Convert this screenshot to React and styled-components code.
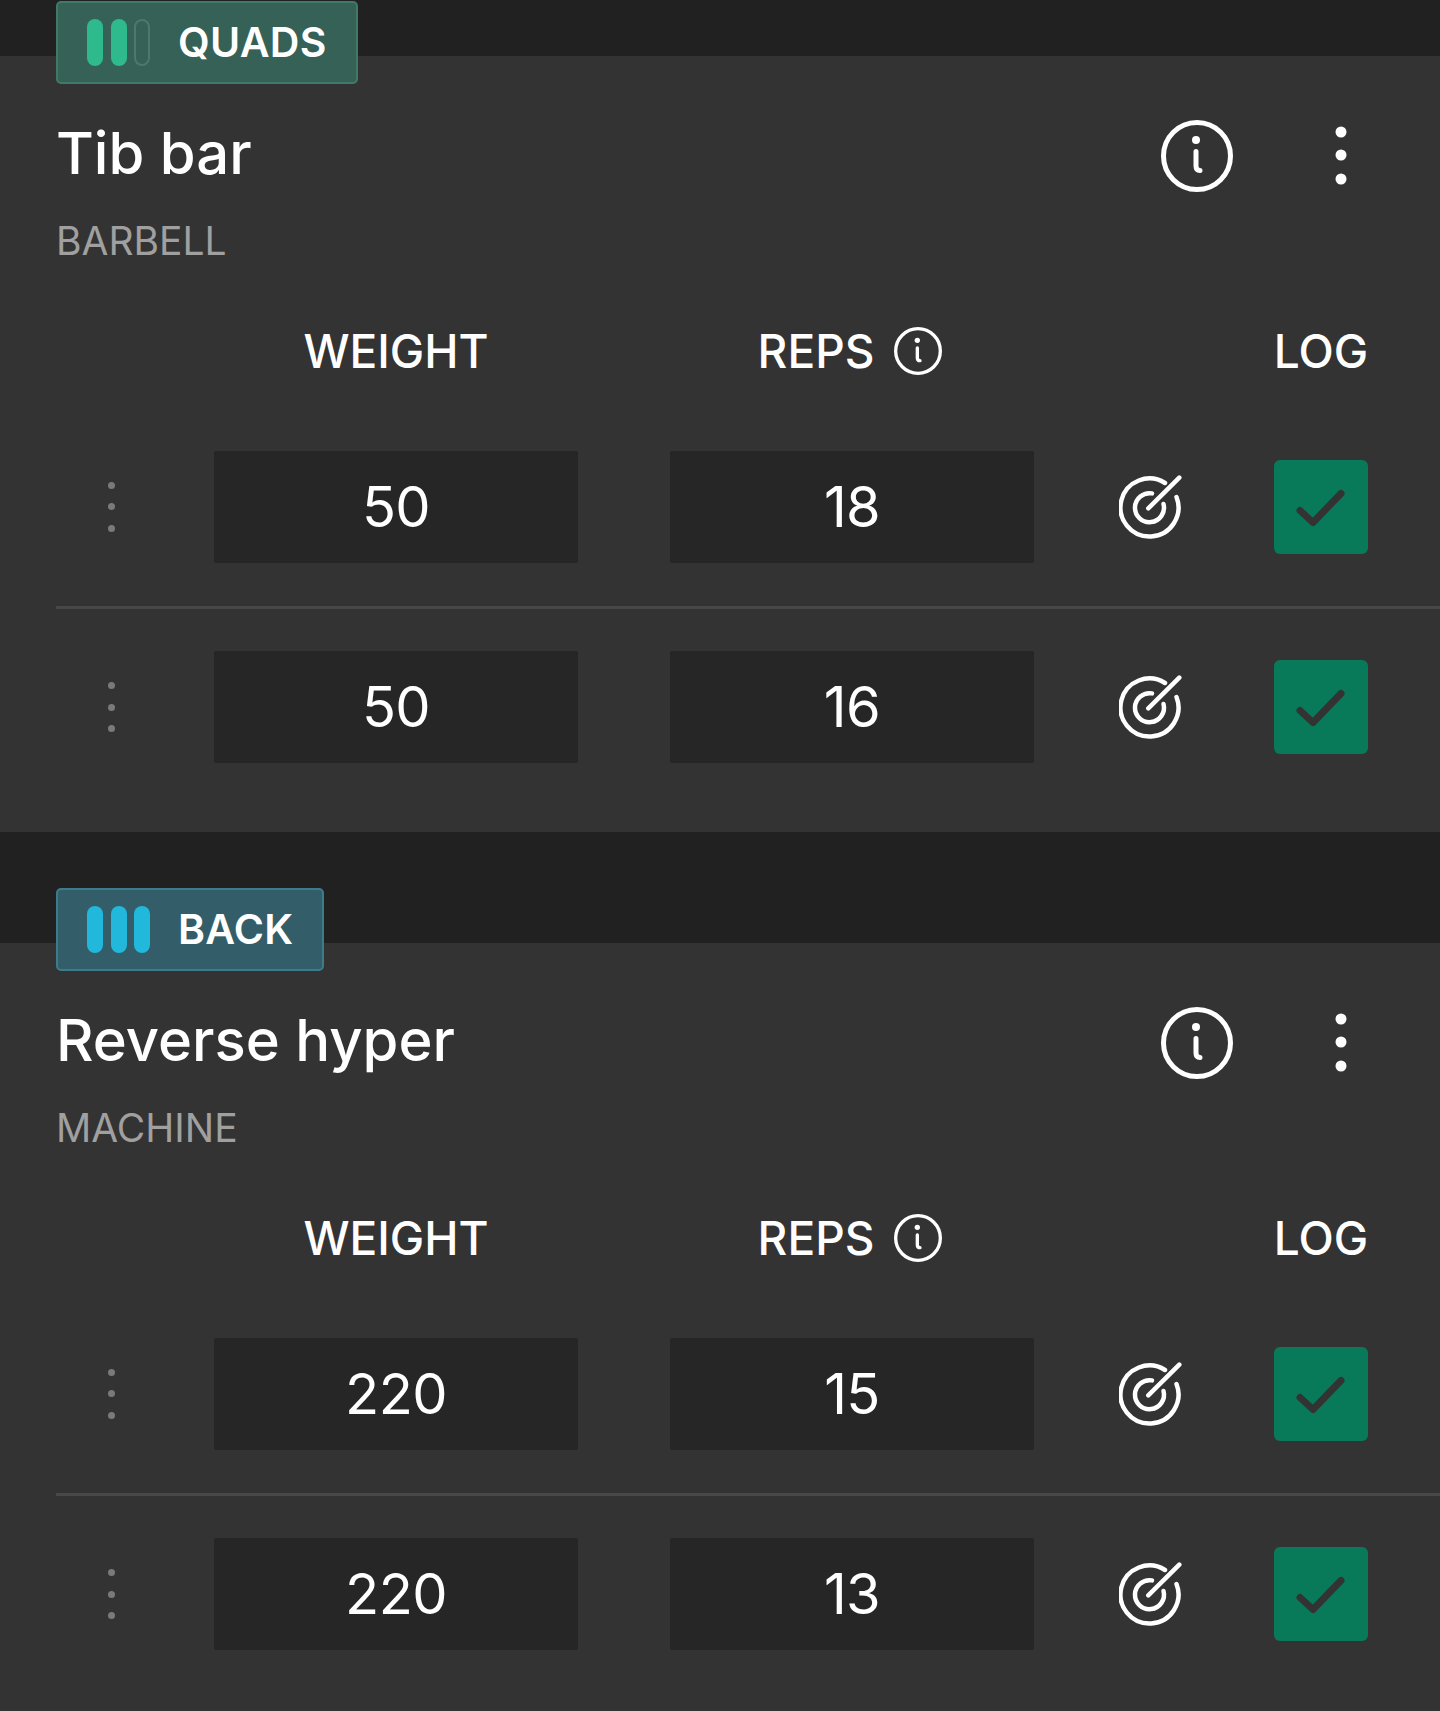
import React from 'react'
import styled, { createGlobalStyle } from 'styled-components'

const GlobalStyle = createGlobalStyle`
html, body {
  margin: 0;
  padding: 0;
  background: #333333;
  font-family: "Inter", "Liberation Sans", sans-serif;
}
`
const Page = styled.div`
  width: 1440px;
  height: 1711px;
  overflow: hidden;
  background: #333333;
`
const Band = styled.div`
  background: #212121;
  height: ${({ tall }) => (tall ? '111px' : '56px')};
`
const Card = styled.section`
  background: #333333;
  height: ${({ h }) => h}px;
  padding-left: 56px;
  box-sizing: border-box;
`
const Badge = styled.div`
  display: inline-flex;
  align-items: center;
  box-sizing: border-box;
  height: 83px;
  margin-top: -55px;
  padding: 0 29px 0 29px;
  gap: 28px;
  border-radius: 5px;
  border: 2px solid ${({ blue }) => (blue ? '#3d7c8a' : '#3f7a69')};
  background: ${({ blue }) => (blue ? '#335e69' : '#366156')};
  vertical-align: top;
`
const Bars = styled.div`
  display: flex;
  gap: 7.5px;
`
const Bar = styled.span`
  display: block;
  width: 16px;
  height: 47px;
  box-sizing: border-box;
  border-radius: 8px;
  background: ${({ off, color }) => (off ? 'transparent' : color)};
  border: ${({ off }) => (off ? '2px solid #4a7a6c' : 'none')};
`
const BadgeName = styled.span`
  color: #ffffff;
  font-size: 41px;
  font-weight: 600;
  letter-spacing: 0.3px;
  line-height: 1;
`
const TitleRow = styled.div`
  display: flex;
  align-items: center;
  justify-content: space-between;
  height: 78px;
  margin-top: 33px;
  padding-right: 93px;
`
const Title = styled.h2`
  margin: -7px 0 0;
  color: #ffffff;
  font-size: 58px;
  font-weight: 500;
  line-height: 1;
`
const TitleIcons = styled.div`
  display: flex;
  align-items: center;
  gap: 102px;
`
const Equipment = styled.div`
  margin-top: 22px;
  color: #a0a0a0;
  font-size: 39px;
  font-weight: 400;
  line-height: 48px;
`
const Grid = styled.div`
  display: grid;
  grid-template-columns: 158px 364px 92px 364px 1fr 94px;
  align-items: center;
  padding-right: 72px;
`
const HeadRow = styled(Grid)`
  height: 60px;
  margin-top: 56px;
  margin-bottom: 26px;
`
const Head = styled.div`
  grid-column: ${({ col }) => col};
  display: flex;
  align-items: center;
  justify-content: center;
  gap: 20px;
  margin-left: ${({ shift }) => shift || 0}px;
  color: #ffffff;
  font-size: 46px;
  font-weight: 500;
  line-height: 1;
  white-space: nowrap;
`
const SetRow = styled(Grid)`
  height: 199px;
  border-top: ${({ first }) => (first ? 'none' : '3px solid #484848')};
  box-sizing: border-box;
`
const Handle = styled.div`
  grid-column: 1;
  display: flex;
  flex-direction: column;
  gap: 14.5px;
  padding-left: 52px;
`
const Dot = styled.span`
  display: block;
  width: 7px;
  height: 7px;
  border-radius: 50%;
  background: #7a7a7a;
`
const ValueBox = styled.div`
  grid-column: ${({ col }) => col};
  height: 112px;
  display: flex;
  align-items: center;
  justify-content: center;
  background: #262626;
  border-radius: 2px;
  color: #ffffff;
  font-size: 56px;
  font-weight: 400;
  letter-spacing: -0.6px;
`
const TargetCell = styled.div`
  grid-column: 5;
  display: flex;
  padding-left: 85px;
`
const Check = styled.div`
  grid-column: 6;
  width: 94px;
  height: 94px;
  display: flex;
  align-items: center;
  justify-content: center;
  border-radius: 6px;
  background: #087a59;
`

function InfoIcon({ size, stroke }) {
  return (
    <svg width={size} height={size} viewBox="0 0 72 72" fill="none" stroke="#fff" strokeLinecap="round">
      <circle cx="36" cy="36" r="33.5" strokeWidth={stroke} />
      <circle cx="35" cy="20" r="4" fill="#fff" stroke="none" />
      <path d="M35 31.5V46c0 3 1.5 4.5 4 4.5" strokeWidth={stroke} />
    </svg>
  )
}

function KebabIcon() {
  return (
    <svg width="12" height="60" viewBox="0 0 12 60" fill="#fff">
      <circle cx="6" cy="6" r="5.5" />
      <circle cx="6" cy="29" r="5.5" />
      <circle cx="6" cy="53" r="5.5" />
    </svg>
  )
}

function TargetIcon() {
  return (
    <svg width="64" height="64" viewBox="0 0 64 64" fill="none" stroke="#fff" strokeWidth="4.5" strokeLinecap="round">
      <path d="M57.5 22A29 29 0 1 1 46 8" />
      <path d="M44.5 29A14.5 14.5 0 1 1 33 18.4" />
      <path d="M29.3 33.3L60.3 2.7" />
    </svg>
  )
}

function CheckIcon() {
  return (
    <svg width="50" height="40" viewBox="0 0 50 40" fill="none" stroke="#333" strokeWidth="7" strokeLinecap="round" strokeLinejoin="round">
      <path d="M4 23.5L17 35.5L45 6.5" />
    </svg>
  )
}

function Exercise({ muscle, color, level, blue, name, equipment, sets, h }) {
  return (
    <Card h={h}>
      <Badge blue={blue}>
        <Bars>
          {[0, 1, 2].map((i) => (
            <Bar key={i} color={color} off={i >= level} />
          ))}
        </Bars>
        <BadgeName>{muscle}</BadgeName>
      </Badge>
      <TitleRow>
        <Title>{name}</Title>
        <TitleIcons>
          <InfoIcon size={72} stroke={5} />
          <KebabIcon />
        </TitleIcons>
      </TitleRow>
      <Equipment>{equipment}</Equipment>
      <HeadRow>
        <Head col={2}>WEIGHT</Head>
        <Head col={4} shift={-4}>
          REPS
          <InfoIcon size={48} stroke={5} />
        </Head>
        <Head col={6}>LOG</Head>
      </HeadRow>
      {sets.map((s, i) => (
        <SetRow key={i} first={i === 0}>
          <Handle>
            <Dot />
            <Dot />
            <Dot />
          </Handle>
          <ValueBox col={2}>{s.weight}</ValueBox>
          <ValueBox col={4}>{s.reps}</ValueBox>
          <TargetCell>
            <TargetIcon />
          </TargetCell>
          <Check>
            <CheckIcon />
          </Check>
        </SetRow>
      ))}
    </Card>
  )
}

export default function App() {
  return (
    <Page>
      <GlobalStyle />
      <Band />
      <Exercise
        h={776}
        muscle="QUADS"
        color="#2fba8e"
        level={2}
        name="Tib bar"
        equipment="BARBELL"
        sets={[{ weight: 50, reps: 18 }, { weight: 50, reps: 16 }]}
      />
      <Band tall />
      <Exercise
        h={768}
        blue
        muscle="BACK"
        color="#22b8dc"
        level={3}
        name="Reverse hyper"
        equipment="MACHINE"
        sets={[{ weight: 220, reps: 15 }, { weight: 220, reps: 13 }]}
      />
    </Page>
  )
}
